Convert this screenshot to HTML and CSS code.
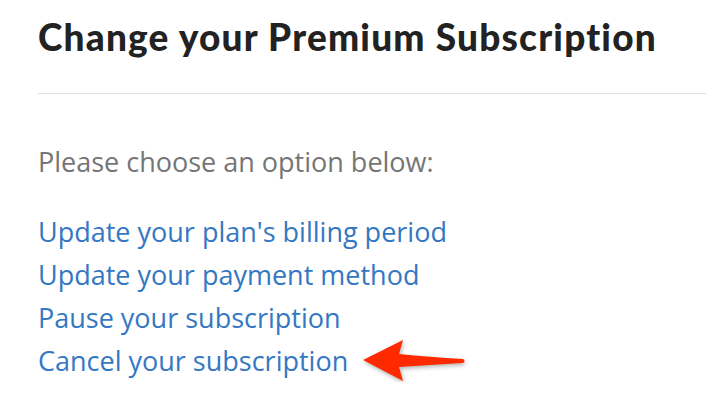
FILE: index.html
```html
<!DOCTYPE html>
<html lang="en">
<head>
    <meta charset="UTF-8">
    <meta name="viewport" content="width=device-width, initial-scale=1.0">
    <title>Change your Premium Subscription</title>
    <link rel="stylesheet" href="styles.css">
</head>
<body>
    <div class="page">
        <h1 class="title">Change your Premium Subscription</h1>
        <p class="intro">Please choose an option below:</p>
        <ul class="options">
            <li><a href="#">Update your plan's billing period</a></li>
            <li><a href="#">Update your payment method</a></li>
            <li><a href="#">Pause your subscription</a></li>
            <li class="marked">
                <a href="#">Cancel your subscription</a>
                <svg class="arrow" width="112" height="50" viewBox="0 0 112 50">
                    <path d="M4 22 L44 2 L40 16 Q70 19 104 21 Q107 23 104 25 Q70 27 40 29 L44 43 Z" fill="#ff2a00"/>
                </svg>
            </li>
        </ul>
    </div>
</body>
</html>
```

FILE: styles.css
```css
body {
    margin: 0;
    background-color: #fff;
    font-family: "Open Sans", sans-serif;
}
.page {
    padding: 13px 0 0 38px;
}
.title {
    margin: 0;
    padding-bottom: 32px;
    border-bottom: 1px solid #e2e2e2;
    font-family: Lato, sans-serif;
    font-weight: 900;
    font-size: 37px;
    line-height: 48px;
    letter-spacing: 1.2px;
    color: #222;
}
.intro {
    margin: 46px 0 0;
    font-size: 27px;
    line-height: 43px;
    color: #757575;
}
.options {
    list-style: none;
    margin: 27px 0 0;
    padding: 0;
}
.options li {
    font-size: 27px;
    line-height: 43px;
}
.options a {
    color: #3477c3;
    text-decoration: none;
}
.marked {
    position: relative;
}
.arrow {
    position: absolute;
    left: 321px;
    top: -1px;
    filter: drop-shadow(1px 2px 2px rgba(0, 0, 0, 0.3));
}
```
